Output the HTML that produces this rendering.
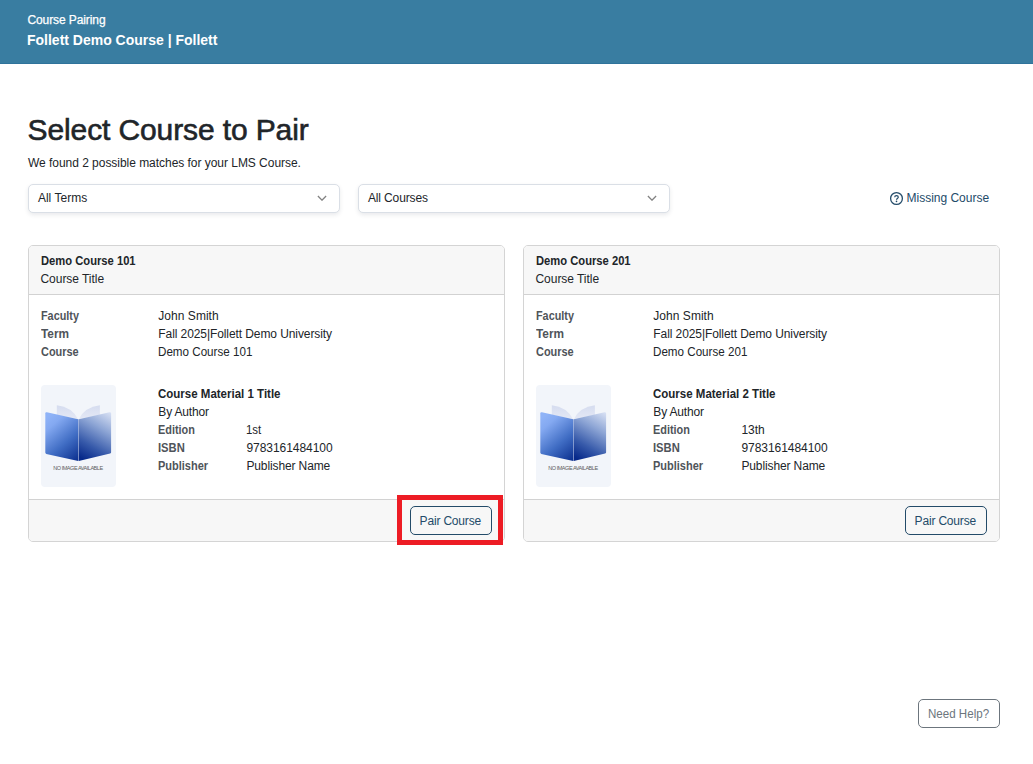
<!DOCTYPE html>
<html lang="en">
<head>
<meta charset="utf-8">
<title>Course Pairing</title>
<style>
*{box-sizing:border-box;}
html,body{margin:0;padding:0;}
body{width:1033px;height:764px;overflow:hidden;background:#ffffff;position:relative;
  font-family:"Liberation Sans",sans-serif;font-size:12px;color:#212529;}
.t{position:absolute;white-space:nowrap;line-height:1;transform-origin:0 0;font-family:"Liberation Sans",sans-serif;}
#hdr{position:absolute;left:0;top:0;width:1033px;height:64px;background:#397da1;border-bottom:1px solid #2f739b;}
.sel{position:absolute;top:184px;height:29px;width:312px;background:#fff;border:1px solid #dadfe6;border-radius:5px;
  box-shadow:0 2px 4px rgba(40,50,70,.10);}
.sel svg{position:absolute;right:12.4px;top:10px;}
.card{position:absolute;top:245px;width:477px;height:297px;border:1px solid #d4d4d4;border-radius:5px;background:#fff;overflow:hidden;}
.card .ch{position:absolute;left:0;top:0;width:100%;height:49px;background:#f7f7f7;border-bottom:1px solid #d2d2d2;}
.card .cf{position:absolute;left:0;bottom:0;width:100%;height:42px;background:#f7f7f7;border-top:1px solid #d2d2d2;}
.tile{position:absolute;top:385px;width:75px;height:102px;}
.btn{position:absolute;height:29px;width:82px;border:1px solid #234b69;border-radius:5px;background:transparent;}
.btn.gray{border-color:#6c757d;background:#fff;}
#hl{position:absolute;left:397px;top:495px;width:106px;height:50px;border:5px solid #ed1c24;}
</style>
</head>
<body>
<div id="hdr"></div>
<div class="sel" style="left:28px"><svg width="10" height="6" viewBox="0 0 10 6"><path d="M0.9 1.0 L5 5.2 L9.1 1.0" fill="none" stroke="#838383" stroke-width="1.3"/></svg></div>
<div class="sel" style="left:358px"><svg width="10" height="6" viewBox="0 0 10 6"><path d="M0.9 1.0 L5 5.2 L9.1 1.0" fill="none" stroke="#838383" stroke-width="1.3"/></svg></div>
<svg style="position:absolute;left:889px;top:191px" width="15" height="15" viewBox="0 0 15 15"><circle cx="7.5" cy="7.5" r="5.9" fill="none" stroke="#234b69" stroke-width="1.3"/><path d="M5.7 6.2 C5.7 4.2 9.3 4.2 9.3 6.2 C9.3 7.4 7.5 7.4 7.5 8.7" fill="none" stroke="#234b69" stroke-width="1.2"/><circle cx="7.5" cy="10.4" r="0.8" fill="#234b69"/></svg>

<div class="card" style="left:28px"><div class="ch"></div><div class="cf"></div></div>
<div class="card" style="left:523px"><div class="ch"></div><div class="cf"></div></div>
<svg class="tile" style="left:41px" width="75" height="102" viewBox="0 0 75 102">
<defs>
<linearGradient id="gl1" gradientUnits="userSpaceOnUse" x1="4" y1="34" x2="38" y2="74"><stop offset="0" stop-color="#8fb3f7"/><stop offset="0.18" stop-color="#84a9f1"/><stop offset="0.6" stop-color="#406dc4"/><stop offset="1" stop-color="#0d3190"/></linearGradient>
<linearGradient id="gr1" gradientUnits="userSpaceOnUse" x1="70" y1="27" x2="42" y2="74"><stop offset="0" stop-color="#dbe3f5"/><stop offset="0.35" stop-color="#8da5d5"/><stop offset="0.72" stop-color="#375aaa"/><stop offset="1" stop-color="#07298a"/></linearGradient>
<linearGradient id="gb1" x1="0" y1="0" x2="0" y2="1"><stop offset="0" stop-color="#d5dcef"/><stop offset="1" stop-color="#e4e8f5"/></linearGradient>
</defs>
<rect width="75" height="102" rx="4" fill="#f2f5fa"/>
<path d="M15.8 20.2 Q31 22 36.9 34 L15.8 30 Z" fill="url(#gb1)"/>
<path d="M58.9 20.2 Q43.8 22 37.9 34 L58.9 30 Z" fill="url(#gb1)"/>
<rect x="37" y="34.3" width="1" height="41.7" fill="#c9d3ec"/>
<path d="M4.3 28.6 Q4.3 27.0 5.9 27.3 L37.25 34.3 L37.25 76.0 L5.3 68.9 Q4.3 68.6 4.3 67.6 Z" fill="url(#gl1)"/>
<path d="M70.1 28.6 Q70.1 27.0 68.5 27.3 L37.75 34.3 L37.75 76.0 L69.1 68.5 Q70.1 68.2 70.1 67.2 Z" fill="url(#gr1)"/>
<text x="12.2" y="84.9" font-family="Liberation Sans, sans-serif" font-size="5.5" fill="#5c5c5c" textLength="49.9" lengthAdjust="spacing">NO IMAGE AVAILABLE</text>
</svg>
<svg class="tile" style="left:536px" width="75" height="102" viewBox="0 0 75 102">
<defs>
<linearGradient id="gl2" gradientUnits="userSpaceOnUse" x1="4" y1="34" x2="38" y2="74"><stop offset="0" stop-color="#8fb3f7"/><stop offset="0.18" stop-color="#84a9f1"/><stop offset="0.6" stop-color="#406dc4"/><stop offset="1" stop-color="#0d3190"/></linearGradient>
<linearGradient id="gr2" gradientUnits="userSpaceOnUse" x1="70" y1="27" x2="42" y2="74"><stop offset="0" stop-color="#dbe3f5"/><stop offset="0.35" stop-color="#8da5d5"/><stop offset="0.72" stop-color="#375aaa"/><stop offset="1" stop-color="#07298a"/></linearGradient>
<linearGradient id="gb2" x1="0" y1="0" x2="0" y2="1"><stop offset="0" stop-color="#d5dcef"/><stop offset="1" stop-color="#e4e8f5"/></linearGradient>
</defs>
<rect width="75" height="102" rx="4" fill="#f2f5fa"/>
<path d="M15.8 20.2 Q31 22 36.9 34 L15.8 30 Z" fill="url(#gb2)"/>
<path d="M58.9 20.2 Q43.8 22 37.9 34 L58.9 30 Z" fill="url(#gb2)"/>
<rect x="37" y="34.3" width="1" height="41.7" fill="#c9d3ec"/>
<path d="M4.3 28.6 Q4.3 27.0 5.9 27.3 L37.25 34.3 L37.25 76.0 L5.3 68.9 Q4.3 68.6 4.3 67.6 Z" fill="url(#gl2)"/>
<path d="M70.1 28.6 Q70.1 27.0 68.5 27.3 L37.75 34.3 L37.75 76.0 L69.1 68.5 Q70.1 68.2 70.1 67.2 Z" fill="url(#gr2)"/>
<text x="12.2" y="84.9" font-family="Liberation Sans, sans-serif" font-size="5.5" fill="#5c5c5c" textLength="49.9" lengthAdjust="spacing">NO IMAGE AVAILABLE</text>
</svg>
<div class="btn" style="left:410px;top:506px"></div>
<div class="btn" style="left:905px;top:506px"></div>
<div class="btn gray" style="left:918px;top:699px"></div>
<div id="hl"></div>
<span class="t" style="left:27.40px;top:14.04px;font-size:12px;letter-spacing:-0.092px;color:#ffffff;-webkit-text-stroke:0.25px #ffffff;">Course Pairing</span>
<span class="t" style="left:27.27px;top:32.10px;font-size:15px;color:#ffffff;transform:scaleX(0.9325);font-weight:bold;">Follett Demo Course | Follett</span>
<span class="t" style="left:27.60px;top:114.61px;font-size:30px;letter-spacing:-0.119px;color:#212529;-webkit-text-stroke:0.6px #212529;">Select Course to Pair</span>
<span class="t" style="left:28.00px;top:157.24px;font-size:12px;letter-spacing:-0.035px;color:#212529;">We found 2 possible matches for your LMS Course.</span>
<span class="t" style="left:37.90px;top:192.34px;font-size:12px;letter-spacing:0.021px;color:#212529;">All Terms</span>
<span class="t" style="left:367.90px;top:192.34px;font-size:12px;letter-spacing:-0.125px;color:#212529;">All Courses</span>
<span class="t" style="left:906.60px;top:191.84px;font-size:12px;letter-spacing:-0.017px;color:#234b69;">Missing Course</span>
<span class="t" style="left:927.90px;top:707.74px;font-size:12px;color:#6c757d;transform:scaleX(0.9639);">Need Help?</span>
<span class="t" style="left:40.50px;top:254.74px;font-size:12px;color:#212529;transform:scaleX(0.9331);font-weight:bold;">Demo Course 101</span>
<span class="t" style="left:40.50px;top:272.74px;font-size:12px;letter-spacing:-0.043px;color:#212529;">Course Title</span>
<span class="t" style="left:41.00px;top:309.74px;font-size:12px;color:#4f545a;transform:scaleX(0.9023);font-weight:bold;">Faculty</span>
<span class="t" style="left:41.00px;top:327.74px;font-size:12px;color:#4f545a;transform:scaleX(0.9862);font-weight:bold;">Term</span>
<span class="t" style="left:41.00px;top:345.74px;font-size:12px;color:#4f545a;transform:scaleX(0.9119);font-weight:bold;">Course</span>
<span class="t" style="left:158.30px;top:309.74px;font-size:12px;letter-spacing:0.038px;color:#212529;">John Smith</span>
<span class="t" style="left:158.30px;top:327.74px;font-size:12px;letter-spacing:-0.085px;color:#212529;">Fall 2025|Follett Demo University</span>
<span class="t" style="left:158.30px;top:345.74px;font-size:12px;color:#212529;transform:scaleX(0.9692);">Demo Course 101</span>
<span class="t" style="left:158.10px;top:387.84px;font-size:12px;color:#212529;transform:scaleX(0.9583);font-weight:bold;">Course Material 1 Title</span>
<span class="t" style="left:158.30px;top:405.84px;font-size:12px;letter-spacing:-0.175px;color:#212529;">By Author</span>
<span class="t" style="left:158.30px;top:423.84px;font-size:12px;color:#4f545a;transform:scaleX(0.9076);font-weight:bold;">Edition</span>
<span class="t" style="left:158.30px;top:441.84px;font-size:12px;color:#4f545a;transform:scaleX(0.9356);font-weight:bold;">ISBN</span>
<span class="t" style="left:158.30px;top:459.84px;font-size:12px;color:#4f545a;transform:scaleX(0.9162);font-weight:bold;">Publisher</span>
<span class="t" style="left:246.40px;top:423.84px;font-size:12px;color:#212529;transform:scaleX(0.9536);">1st</span>
<span class="t" style="left:246.40px;top:441.84px;font-size:12px;letter-spacing:-0.040px;color:#212529;">9783161484100</span>
<span class="t" style="left:246.40px;top:459.84px;font-size:12px;letter-spacing:-0.115px;color:#212529;">Publisher Name</span>
<span class="t" style="left:419.60px;top:514.74px;font-size:12px;letter-spacing:-0.178px;color:#234b69;">Pair Course</span>
<span class="t" style="left:535.50px;top:254.74px;font-size:12px;color:#212529;transform:scaleX(0.9331);font-weight:bold;">Demo Course 201</span>
<span class="t" style="left:535.50px;top:272.74px;font-size:12px;letter-spacing:-0.043px;color:#212529;">Course Title</span>
<span class="t" style="left:536.00px;top:309.74px;font-size:12px;color:#4f545a;transform:scaleX(0.9023);font-weight:bold;">Faculty</span>
<span class="t" style="left:536.00px;top:327.74px;font-size:12px;color:#4f545a;transform:scaleX(0.9862);font-weight:bold;">Term</span>
<span class="t" style="left:536.00px;top:345.74px;font-size:12px;color:#4f545a;transform:scaleX(0.9119);font-weight:bold;">Course</span>
<span class="t" style="left:653.30px;top:309.74px;font-size:12px;letter-spacing:0.038px;color:#212529;">John Smith</span>
<span class="t" style="left:653.30px;top:327.74px;font-size:12px;letter-spacing:-0.085px;color:#212529;">Fall 2025|Follett Demo University</span>
<span class="t" style="left:653.30px;top:345.74px;font-size:12px;color:#212529;transform:scaleX(0.9692);">Demo Course 201</span>
<span class="t" style="left:653.10px;top:387.84px;font-size:12px;color:#212529;transform:scaleX(0.9583);font-weight:bold;">Course Material 2 Title</span>
<span class="t" style="left:653.30px;top:405.84px;font-size:12px;letter-spacing:-0.175px;color:#212529;">By Author</span>
<span class="t" style="left:653.30px;top:423.84px;font-size:12px;color:#4f545a;transform:scaleX(0.9076);font-weight:bold;">Edition</span>
<span class="t" style="left:653.30px;top:441.84px;font-size:12px;color:#4f545a;transform:scaleX(0.9356);font-weight:bold;">ISBN</span>
<span class="t" style="left:653.30px;top:459.84px;font-size:12px;color:#4f545a;transform:scaleX(0.9162);font-weight:bold;">Publisher</span>
<span class="t" style="left:741.40px;top:423.84px;font-size:12px;letter-spacing:0.006px;color:#212529;">13th</span>
<span class="t" style="left:741.40px;top:441.84px;font-size:12px;letter-spacing:-0.040px;color:#212529;">9783161484100</span>
<span class="t" style="left:741.40px;top:459.84px;font-size:12px;letter-spacing:-0.115px;color:#212529;">Publisher Name</span>
<span class="t" style="left:914.60px;top:514.74px;font-size:12px;letter-spacing:-0.178px;color:#234b69;">Pair Course</span>
</body>
</html>
